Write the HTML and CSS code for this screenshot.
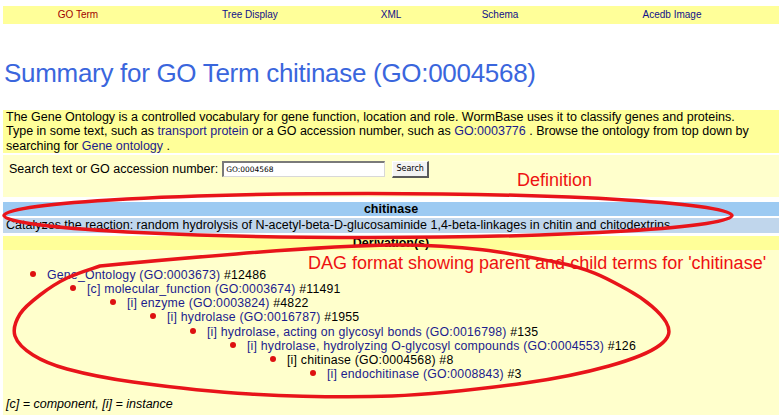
FILE: index.html
```html
<!DOCTYPE html>
<html>
<head>
<meta charset="utf-8">
<title>Summary for GO Term chitinase (GO:0004568)</title>
<link rel="stylesheet" href="styles.css">
</head>
<body>
<div class="page">
  <nav class="topnav">
    <a class="current" href="#">GO Term</a>
    <a href="#">Tree Display</a>
    <a href="#">XML</a>
    <a href="#">Schema</a>
    <a href="#">Acedb Image</a>
  </nav>

  <h1 class="title">Summary for GO Term chitinase (GO:0004568)</h1>

  <div class="intro">
    <p class="intro-line">The Gene Ontology is a controlled vocabulary for gene function, location and role. WormBase uses it to classify genes and proteins.</p>
    <p class="intro-line">Type in some text, such as <a href="#">transport protein</a> or a GO accession number, such as <a href="#">GO:0003776</a> . Browse the ontology from top down by</p>
    <p class="intro-line">searching for <a href="#">Gene ontology</a> .</p>
  </div>

  <form class="search">
    <label class="search-label">Search text or GO accession number:</label>
    <input class="search-input" type="text" value="GO:0004568">
    <button class="search-btn" type="button">Search</button>
  </form>

  <div class="def-head">chitinase</div>
  <div class="def-body">Catalyzes the reaction: random hydrolysis of N-acetyl-beta-D-glucosaminide 1,4-beta-linkages in chitin and chitodextrins.</div>
  <div class="deriv-head">Derivation(s)</div>

  <div class="tree">
    <ul class="dag">
      <li><a href="#">Gene_Ontology (GO:0003673)</a> #12486
        <ul class="dag">
          <li><a href="#">[c] molecular_function (GO:0003674)</a> #11491
            <ul class="dag">
              <li><a href="#">[i] enzyme (GO:0003824)</a> #4822
                <ul class="dag">
                  <li><a href="#">[i] hydrolase (GO:0016787)</a> #1955
                    <ul class="dag">
                      <li><a href="#">[i] hydrolase, acting on glycosyl bonds (GO:0016798)</a> #135
                        <ul class="dag">
                          <li><a href="#">[i] hydrolase, hydrolyzing O-glycosyl compounds (GO:0004553)</a> #126
                            <ul class="dag">
                              <li>[i] chitinase (GO:0004568) #8
                                <ul class="dag">
                                  <li><a href="#">[i] endochitinase (GO:0008843)</a> #3</li>
                                </ul>
                              </li>
                            </ul>
                          </li>
                        </ul>
                      </li>
                    </ul>
                  </li>
                </ul>
              </li>
            </ul>
          </li>
        </ul>
      </li>
    </ul>
    <p class="legend">[c] = component, [i] = instance</p>
  </div>
</div>

<div class="annotation ann-def">Definition</div>
<div class="annotation ann-dag">DAG format showing parent and child terms for 'chitinase'</div>

<svg class="marks" width="784" height="415" viewBox="0 0 784 415" xmlns="http://www.w3.org/2000/svg">
  <ellipse cx="368" cy="215.5" rx="364" ry="22" fill="none" stroke="#e8141a" stroke-width="3.5"/>
  <path fill="none" stroke="#e8141a" stroke-width="3.5" stroke-linejoin="round"
    d="M392 245 C467.8 244.3 515.7 254.5 555 262 C594.3 269.5 609.5 280 628 290 C646.5 300 660.7 312.8 666 322 C671.3 331.2 669.5 337.7 660 345 C650.5 352.3 631.5 359.7 609 366 C586.5 372.3 561.2 378 525 383 C488.8 388 437.8 394.2 392 396 C346.2 397.8 293.2 396.3 250 394 C206.8 391.7 163.5 386.2 133 382 C102.5 377.8 83.7 373.5 67 369 C50.3 364.5 41.7 360.5 33 355 C24.3 349.5 17.2 342.8 15 336 C12.8 329.2 15.8 320.8 20 314 C24.2 307.2 32.2 301 40 295 C47.8 289 57 282.8 67 278 C77 273.2 88 270 100 266 C150 261 316 245.7 392 245 Z"/>
</svg>
</body>
</html>
```

FILE: styles.css
```css
html, body {
  margin: 0;
  padding: 0;
  background: #ffffff;
}

body {
  position: relative;
  width: 784px;
  height: 415px;
  overflow: hidden;
  font-family: "Liberation Sans", Arial, sans-serif;
  font-size: 12.5px;
  color: #000;
}

.page {
  padding: 6px 5px 0 3px;
}

a {
  color: #1c1c8e;
  text-decoration: none;
}

/* top navigation */
.topnav {
  display: grid;
  grid-template-columns: 150px 194px 88px 130px 1fr;
  height: 18px;
  line-height: 18px;
  background: #ffff99;
  font-size: 10px;
  text-align: center;
}

.topnav a {
  color: #10108a;
}

.topnav a.current {
  color: #a00000;
}

/* title */
.title {
  margin: 34px 0 22px 1px;
  font-size: 26px;
  line-height: 30px;
  font-weight: normal;
  letter-spacing: -0.3px;
  color: #3a66dd;
}

/* intro */
.intro {
  background: #ffff99;
  padding: 0 3px;
  height: 43px;
}

.intro-line {
  margin: 0;
  height: 14.4px;
  line-height: 14.4px;
  white-space: nowrap;
}

/* search */
.search {
  margin: 2px 0 0;
  background: #ffffcc;
  height: 42px;
  box-sizing: border-box;
  padding: 5px 6px 0;
  display: flex;
  align-items: center;
  align-content: flex-start;
  flex-wrap: wrap;
}

.search-label {
  height: 18px;
  line-height: 18px;
  margin-right: 4px;
}

.search-input {
  box-sizing: border-box;
  width: 163px;
  height: 16px;
  margin: 0 7px 0 0;
  padding: 0 2px;
  border-width: 2px 1px 1px 2px;
  border-style: solid;
  border-color: #7a7a7a #d8d8d8 #d8d8d8 #7a7a7a;
  background: #fff;
  font-family: "DejaVu Sans", Verdana, sans-serif;
  font-size: 7.5px;
  color: #000;
}

.search-btn {
  box-sizing: border-box;
  width: 37px;
  height: 17px;
  padding: 0;
  margin: 0;
  border-width: 1px 2px 2px 1px;
  border-style: solid;
  border-color: #ffffff #5a5a5a #5a5a5a #ffffff;
  background: #f3f3f3;
  font-family: "DejaVu Sans", Verdana, sans-serif;
  font-size: 8px;
  color: #000;
}

/* definition */
.def-head {
  margin-top: 5px;
  height: 14px;
  line-height: 14px;
  background: #9ccaf2;
  font-weight: bold;
  text-align: center;
}

.def-body {
  margin-top: 2px;
  height: 15px;
  line-height: 15px;
  padding: 0 3px;
  background: #c0d6ec;
  white-space: nowrap;
}

.deriv-head {
  margin-top: 3px;
  height: 14px;
  line-height: 14px;
  background: #ffff99;
  font-weight: bold;
  text-align: center;
}

/* tree */
.tree {
  background: #ffffcc;
  padding: 18px 0 6px;
  min-height: 160px;
}

.dag {
  list-style: none;
  margin: 0;
  padding: 0 0 0 40px;
  font-size: 12.3px;
  letter-spacing: 0.2px;
}

.tree > .dag {
  padding-left: 44px;
}

.dag li {
  line-height: 14.15px;
  white-space: nowrap;
}

.dag li::before {
  content: "";
  display: inline-block;
  width: 6px;
  height: 6px;
  border-radius: 50%;
  background: #dd1111;
  margin-left: -17px;
  margin-right: 11px;
  vertical-align: 2px;
}

.legend {
  margin: 16px 0 0;
  padding-left: 3px;
  line-height: 14px;
  font-style: italic;
}

/* annotations drawn over the page */
.annotation {
  position: absolute;
  font-family: "Liberation Sans", Arial, sans-serif;
  font-size: 18px;
  line-height: 20px;
  color: #ee1111;
  white-space: nowrap;
}

.ann-def {
  left: 517px;
  top: 170px;
}

.ann-dag {
  left: 308px;
  top: 253px;
}

.marks {
  position: absolute;
  left: 0;
  top: 0;
  pointer-events: none;
}
```
